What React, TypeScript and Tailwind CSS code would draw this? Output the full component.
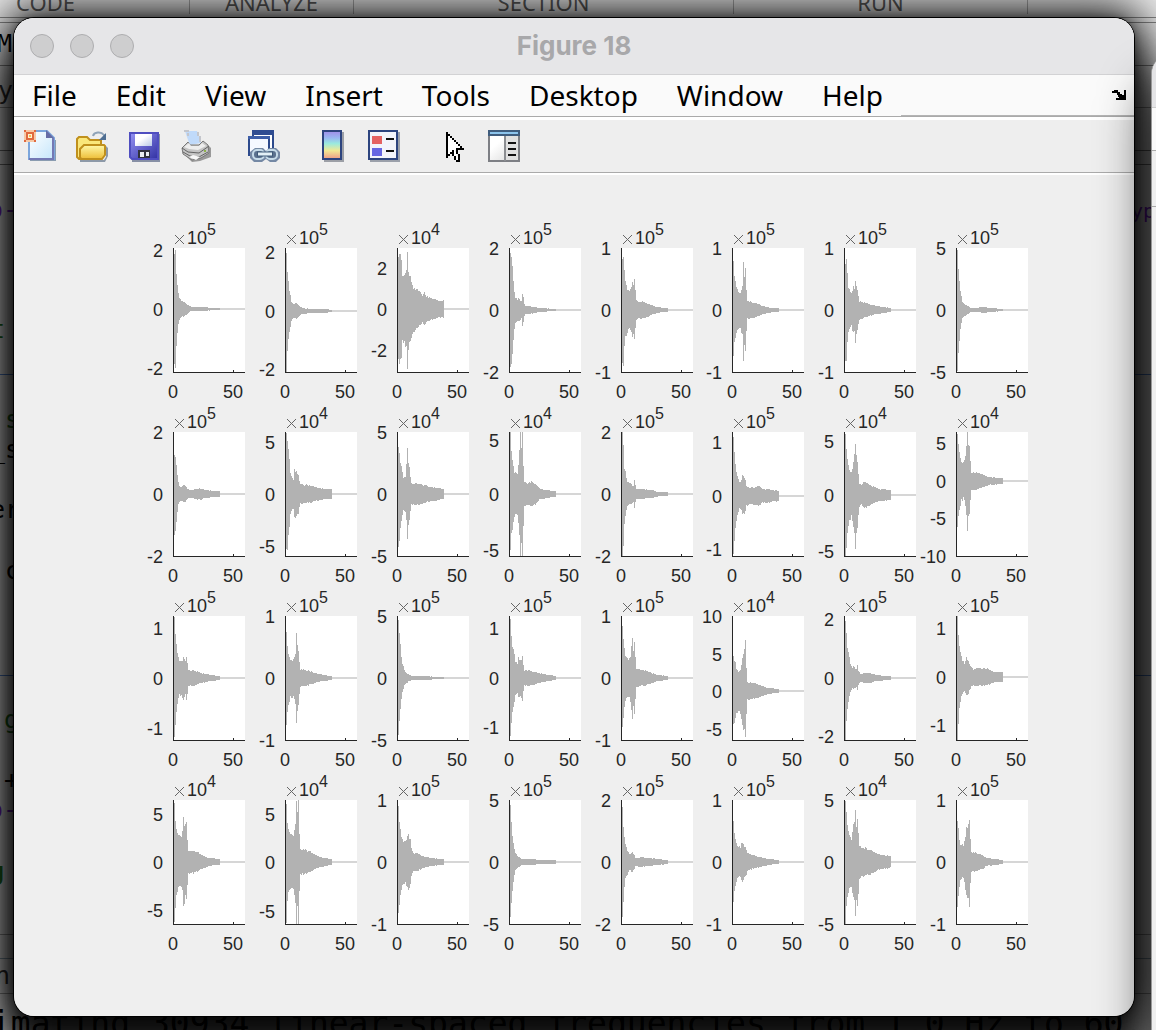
import React from "react";

type Point = [number, number];
type Tick = [string, number];

interface Plot {
  exp: number;
  zero: number;
  ticks: Tick[];
  env: Point[];
}

const PLOT_W = 72;
const PLOT_H = 124;
const SIGNAL_END = 46;

const full = (n: number): Tick[] => [
  [String(n), 0],
  ["0", 62],
  [String(-n), 124],
];

const plots: Plot[] = [
  // row 1
  { exp: 5, zero: 61, ticks: [["2", 2], ["0", 61], ["-2", 120]], env: [[1, 60], [2, 56], [3, 36], [4, 24], [5, 16], [6, 11], [8, 8], [10, 8], [12, 6], [15, 4], [18, 2], [25, 2], [46, 1]] },
  { exp: 5, zero: 63, ticks: [["2", 4], ["0", 63], ["-2", 121]], env: [[1, 62], [2, 40], [3, 30], [4, 20], [5, 17], [6, 10], [8, 7], [11, 8], [14, 5], [17, 3], [25, 2], [40, 2], [46, 1]] },
  { exp: 4, zero: 61, ticks: [["2", 20], ["0", 61], ["-2", 102]], env: [[1, 50], [2, 55], [4, 54], [5, 34], [7, 35], [9, 40], [10, 57], [11, 40], [13, 32], [16, 22], [20, 20], [22, 17], [25, 14], [27, 16], [30, 12], [34, 11], [38, 10], [42, 8], [46, 9]] },
  { exp: 5, zero: 62, ticks: full(2), env: [[1, 57], [2, 52], [3, 48], [4, 30], [5, 20], [6, 13], [8, 11], [10, 11], [12, 9], [13, 15], [14, 12], [15, 6], [16, 4], [20, 4], [25, 3], [32, 2], [46, 1]] },
  { exp: 5, zero: 62, ticks: full(1), env: [[1, 55], [2, 54], [3, 38], [4, 28], [6, 22], [8, 18], [10, 24], [11, 30], [12, 26], [13, 29], [14, 20], [15, 10], [17, 8], [22, 9], [25, 7], [30, 5], [36, 3], [42, 2], [46, 2]] },
  { exp: 5, zero: 62, ticks: full(1), env: [[1, 47], [2, 33], [3, 31], [4, 22], [6, 19], [8, 18], [9, 22], [10, 26], [11, 49], [12, 36], [13, 43], [14, 20], [15, 9], [20, 8], [24, 7], [28, 5], [35, 3], [42, 2], [46, 2]] },
  { exp: 5, zero: 62, ticks: full(1), env: [[1, 50], [2, 48], [3, 35], [4, 24], [5, 20], [7, 16], [8, 20], [9, 24], [10, 22], [11, 31], [12, 25], [13, 22], [14, 14], [15, 9], [20, 8], [25, 6], [32, 4], [40, 3], [46, 2]] },
  { exp: 5, zero: 62, ticks: full(5), env: [[1, 58], [2, 45], [3, 30], [4, 20], [5, 14], [6, 8], [8, 6], [11, 4], [15, 2], [20, 2], [26, 3], [35, 2], [46, 1]] },
  // row 2
  { exp: 5, zero: 62, ticks: full(2), env: [[1, 43], [2, 36], [3, 28], [4, 18], [5, 11], [6, 8], [8, 7], [10, 9], [12, 8], [14, 5], [18, 4], [22, 5], [27, 6], [32, 4], [40, 3], [46, 3]] },
  { exp: 4, zero: 62, ticks: [["5", 10], ["0", 62], ["-5", 114]], env: [[1, 60], [3, 46], [4, 34], [5, 22], [6, 18], [8, 14], [9, 25], [11, 23], [13, 20], [14, 14], [15, 10], [18, 9], [24, 9], [30, 7], [40, 5], [46, 5]] },
  { exp: 4, zero: 62, ticks: full(5), env: [[1, 50], [2, 45], [3, 33], [5, 22], [6, 17], [8, 18], [9, 28], [10, 46], [11, 33], [12, 28], [13, 18], [14, 11], [18, 11], [24, 10], [30, 8], [36, 7], [46, 5]] },
  { exp: 4, zero: 62, ticks: [["5", 8], ["0", 62], ["-5", 118]], env: [[1, 62], [2, 42], [4, 30], [5, 23], [8, 22], [9, 30], [10, 45], [11, 62], [12, 50], [13, 68], [14, 30], [15, 13], [18, 11], [22, 12], [26, 10], [30, 6], [36, 4], [46, 3]] },
  { exp: 5, zero: 62, ticks: full(2), env: [[1, 62], [2, 50], [3, 28], [5, 16], [6, 12], [8, 11], [11, 9], [12, 8], [13, 14], [14, 9], [15, 5], [20, 5], [30, 4], [38, 2], [46, 2]] },
  { exp: 5, zero: 64, ticks: [["1", 10], ["0", 64], ["-1", 117]], env: [[1, 62], [2, 48], [3, 33], [4, 24], [5, 20], [7, 13], [9, 15], [10, 20], [13, 16], [14, 10], [18, 8], [22, 9], [27, 10], [30, 7], [40, 6], [46, 5]] },
  { exp: 4, zero: 63, ticks: [["5", 9], ["0", 63], ["-5", 119]], env: [[1, 62], [2, 50], [3, 38], [5, 25], [7, 22], [8, 26], [9, 32], [10, 42], [11, 56], [12, 38], [13, 32], [14, 20], [15, 12], [17, 10], [20, 14], [24, 11], [30, 8], [36, 6], [46, 5]] },
  { exp: 4, zero: 49, ticks: [["5", 11], ["0", 49], ["-5", 86], ["-10", 124]], env: [[1, 45], [2, 36], [3, 28], [5, 20], [7, 18], [8, 20], [9, 26], [10, 34], [11, 54], [12, 38], [13, 34], [14, 20], [15, 9], [20, 9], [25, 7], [32, 4], [46, 3]] },
  // row 3
  { exp: 5, zero: 62, ticks: [["1", 12], ["0", 62], ["-1", 112]], env: [[1, 61], [2, 45], [4, 25], [6, 18], [8, 17], [10, 21], [12, 17], [13, 23], [14, 16], [15, 8], [20, 8], [28, 5], [38, 3], [46, 2]] },
  { exp: 5, zero: 62, ticks: full(1), env: [[1, 48], [2, 35], [3, 26], [5, 20], [8, 18], [9, 22], [10, 26], [11, 46], [12, 34], [13, 28], [14, 18], [15, 9], [20, 8], [24, 7], [30, 5], [38, 3], [46, 2]] },
  { exp: 5, zero: 62, ticks: full(5), env: [[1, 59], [2, 45], [3, 34], [4, 22], [5, 15], [7, 8], [9, 5], [12, 3], [15, 2], [25, 2], [46, 1]] },
  { exp: 5, zero: 62, ticks: [["1", 12], ["0", 62], ["-1", 111]], env: [[1, 60], [2, 45], [3, 33], [5, 23], [6, 17], [8, 15], [9, 20], [11, 17], [13, 23], [14, 14], [15, 8], [20, 8], [26, 6], [34, 4], [46, 2]] },
  { exp: 5, zero: 62, ticks: full(1), env: [[1, 50], [2, 38], [3, 28], [5, 20], [7, 18], [8, 20], [9, 23], [11, 39], [12, 28], [13, 35], [14, 20], [15, 9], [20, 8], [24, 8], [28, 6], [36, 3], [46, 2]] },
  { exp: 4, zero: 75, ticks: [["10", 0], ["5", 38], ["0", 75], ["-5", 113]], env: [[1, 37], [2, 32], [3, 28], [4, 22], [7, 20], [8, 22], [9, 28], [11, 38], [12, 40], [13, 51], [14, 24], [15, 9], [20, 8], [25, 7], [30, 5], [36, 3], [46, 2]] },
  { exp: 5, zero: 62, ticks: [["2", 3], ["0", 62], ["-2", 120]], env: [[1, 62], [2, 45], [3, 30], [5, 20], [6, 14], [8, 10], [9, 12], [12, 9], [13, 12], [14, 7], [16, 4], [20, 5], [26, 5], [32, 3], [46, 2]] },
  { exp: 5, zero: 61, ticks: [["1", 12], ["0", 61], ["-1", 109]], env: [[1, 61], [2, 45], [3, 34], [4, 25], [6, 17], [8, 14], [10, 19], [12, 17], [13, 14], [15, 10], [17, 8], [20, 9], [28, 9], [32, 8], [38, 5], [46, 5]] },
  // row 4
  { exp: 4, zero: 62, ticks: [["5", 14], ["0", 62], ["-5", 110]], env: [[1, 60], [2, 45], [3, 32], [5, 26], [8, 25], [9, 30], [10, 43], [12, 36], [13, 40], [14, 24], [15, 12], [20, 11], [24, 10], [28, 7], [36, 4], [46, 3]] },
  { exp: 4, zero: 62, ticks: [["5", 14], ["0", 62], ["-5", 111]], env: [[1, 60], [2, 40], [3, 32], [5, 27], [8, 26], [9, 34], [10, 40], [11, 59], [12, 48], [13, 68], [14, 30], [15, 13], [20, 12], [24, 11], [30, 7], [36, 5], [46, 3]] },
  { exp: 5, zero: 62, ticks: full(1), env: [[1, 55], [2, 42], [3, 32], [5, 22], [8, 20], [9, 24], [11, 27], [13, 24], [14, 14], [16, 9], [20, 9], [26, 6], [34, 4], [46, 3]] },
  { exp: 5, zero: 62, ticks: full(5), env: [[1, 59], [2, 40], [3, 28], [4, 20], [5, 14], [6, 9], [9, 5], [13, 3], [24, 3], [30, 2], [46, 2]] },
  { exp: 5, zero: 62, ticks: full(2), env: [[1, 56], [2, 38], [3, 26], [4, 18], [6, 12], [8, 8], [11, 10], [13, 7], [14, 4], [20, 5], [28, 4], [36, 3], [46, 2]] },
  { exp: 5, zero: 62, ticks: full(1), env: [[1, 42], [2, 30], [4, 20], [6, 15], [8, 15], [10, 21], [12, 16], [13, 15], [15, 9], [20, 7], [28, 5], [36, 3], [46, 2]] },
  { exp: 4, zero: 62, ticks: full(5), env: [[1, 60], [2, 48], [3, 36], [5, 26], [7, 24], [9, 38], [10, 40], [11, 55], [12, 38], [13, 44], [14, 30], [15, 16], [18, 15], [24, 13], [30, 10], [36, 7], [46, 6]] },
  { exp: 5, zero: 62, ticks: full(1), env: [[1, 46], [2, 36], [3, 24], [4, 18], [7, 16], [8, 20], [9, 28], [10, 34], [12, 40], [13, 45], [14, 22], [15, 10], [20, 9], [26, 7], [30, 4], [40, 3], [46, 2]] },
];

function envelopeAt(env: Point[], x: number): number {
  for (let i = 1; i < env.length; i++) {
    const [x0, h0] = env[i - 1];
    const [x1, h1] = env[i];
    if (x <= x1) return h0 + ((h1 - h0) * (x - x0)) / (x1 - x0);
  }
  return env[env.length - 1][1];
}

function waveform(plot: Plot, seed: number): string {
  const jitter = (n: number) => {
    const s = Math.sin(n * 12.9898 + seed * 78.233) * 43758.5453;
    return 1.06 - 0.16 * (s - Math.floor(s));
  };
  let top = "";
  let bottom = "";
  for (let x = 1; x <= SIGNAL_END; x++) {
    const h = envelopeAt(plot.env, x);
    const up = Math.max(0, Math.round(plot.zero - h * jitter(x)));
    const down = Math.min(PLOT_H, Math.round(plot.zero + h * jitter(x + 100)));
    top += `L${x} ${up}H${x + 1}`;
    bottom = `L${x + 1} ${down}H${x}` + bottom;
  }
  return `M1 ${plot.zero}${top}${bottom}Z`;
}

function Subplot({ plot, seed }: { plot: Plot; seed: number }) {
  return (
    <svg
      role="img"
      aria-label={`Signal ${seed + 1}`}
      width={112}
      height={184}
      className="block overflow-visible fill-[#262626] font-['Liberation_Sans',Arial,sans-serif] text-[18px]"
    >
      <g transform="translate(44 33)">
        <rect width={PLOT_W} height={PLOT_H} fill="#fff" />
        <g shapeRendering="crispEdges">
          <rect x={SIGNAL_END} y={plot.zero - 1} width={PLOT_W - SIGNAL_END} height={2} fill="#d6d6d6" />
          <path d={waveform(plot, seed)} fill="#b2b2b2" />
          <rect width={1} height={PLOT_H + 1} />
          <rect y={PLOT_H} width={PLOT_W} height={1} />
          <rect x={60} y={PLOT_H - 2} width={1} height={2} />
        </g>
        {plot.ticks.map(([label, y]) => (
          <text key={label} x={-10} y={y + 7} textAnchor="end">
            {label}
          </text>
        ))}
        <text x={0} y={150} textAnchor="middle">0</text>
        <text x={60} y={150} textAnchor="middle">50</text>
        <path d="M2 -13L11 -4M11 -13L2 -4" stroke="#666" fill="none" />
        <text x={14} y={-4}>10</text>
        <text x={34} y={-13} className="text-[16px]">{plot.exp}</text>
      </g>
    </svg>
  );
}

const iconProps = { width: 32, height: 32, viewBox: "0 0 32 32", "aria-hidden": true } as const;

const NewIcon = () => (
  <svg {...iconProps}>
    <defs>
      <linearGradient id="page" x1="0" y1="0" x2="1" y2="1">
        <stop offset="0" stopColor="#fff" /><stop offset="1" stopColor="#c5e6fb" />
      </linearGradient>
    </defs>
    <path d="M6 31h26V10h-2v19H6z" fill="#8a9cb0" />
    <path d="M5 1h18l7 7v21H5z" fill="url(#page)" stroke="#7ca6dc" strokeWidth="2" />
    <path d="M29 8v21H5" fill="none" stroke="#7479b4" strokeWidth="2" />
    <path d="M22 0l8 8h-8z" fill="#666da6" />
    <path d="M0 0h12v12H0z" fill="#f6c9a6" />
    <path d="M3 3h6v6H3z" fill="#fff3d0" stroke="#e0693f" strokeWidth="2" />
    <path d="M5 5h2v2H5z" fill="#f4ba50" />
    <path d="M0 0h2v2H0zM10 0h2v2h-2zM0 10h2v2H0zM10 10h2v2h-2z" fill="#e0693f" />
  </svg>
);

const OpenIcon = () => (
  <svg {...iconProps}>
    <defs>
      <linearGradient id="folder" x1="0" y1="0" x2="0" y2="1">
        <stop offset="0" stopColor="#fff9a8" /><stop offset="1" stopColor="#edbd36" />
      </linearGradient>
    </defs>
    <path d="M4 30h24l2-3V16l2 2v8l-3 6H4z" fill="#8d99a8" />
    <path d="M1 27V9l2-2h8l3 3h11v5H9L4 29H3z" fill="#fae77a" stroke="#c0901c" strokeWidth="2" />
    <path d="M8 15h20l1 1v9l-3 4H5l-1-2V19z" fill="url(#folder)" stroke="#c0901c" strokeWidth="2" />
    <path d="M17 6c1-4 8-5 11-1l1 2" fill="none" stroke="#8fa3b8" strokeWidth="2" />
    <path d="M30 3v7h-7z" fill="#4f6e92" />
  </svg>
);

const SaveIcon = () => (
  <svg {...iconProps}>
    <defs>
      <linearGradient id="disk" x1="0" y1="0" x2="1" y2="1">
        <stop offset="0" stopColor="#9593f4" /><stop offset="1" stopColor="#3131a2" />
      </linearGradient>
      <linearGradient id="diskLabel" x1="0" y1="0" x2="1" y2="1">
        <stop offset=".4" stopColor="#fff" /><stop offset="1" stopColor="#b9c9e8" />
      </linearGradient>
    </defs>
    <path d="M4 4h28v28H4z" fill="#8790a5" />
    <path d="M1 3h28v26H3l-2-2z" transform="translate(1 0)" fill="url(#disk)" stroke="#4f4ec0" strokeWidth="2" />
    <path d="M7 4h17v12H7z" fill="url(#diskLabel)" />
    <path d="M10 20h12v8H10z" fill="#30323c" />
    <path d="M12 22h4v5h-4zM18 22h3v4h-3z" fill="#e9edf0" />
  </svg>
);

const PrintIcon = () => (
  <svg {...iconProps}>
    <path d="M7 27l5 5 8-1 11-4v-9l-2-2z" fill="#999" />
    <path d="M5 1h12l4 12-11 2-2-5z" fill="#c0dafa" />
    <path d="M4 0h5v2H4zM7 3h2v3H7zM17 2h2v4h-2zM19 6h2v6h-2z" fill="#c4c6cc" />
    <path d="M2 18l6-6 2 3h9l4-4 5 4 1 8-8 5-9 2-9-6z" fill="#c4c4c4" stroke="#777" />
    <path d="M4 17l5-4 2 3h8l3-3 4 3-8 4-9-1z" fill="#ededed" />
    <path d="M2 18l6 4 11 1 10-7M3 22l7 4 9 1 9-5" fill="none" stroke="#636363" />
    <path d="M9 27l4-2 7 2-4 3z" fill="#f8f8f8" />
    <path d="M24 20h2v2h-2z" fill="#8db24b" />
  </svg>
);

const LinkIcon = () => (
  <svg {...iconProps}>
    <path d="M5 1h20v18H5z" fill="#fff" stroke="#2d4a8c" strokeWidth="2" />
    <path d="M4 0h22v5H4z" fill="#2f4c91" />
    <path d="M1 7h20v18H1z" fill="#f5f8ff" stroke="#2d4a8c" strokeWidth="2" />
    <path d="M0 6h22v3H0z" fill="#3d5ea8" />
    <path d="M7 18h8l3 3 3-3h7l4 4v6l-4 4h-6l-4-3-4 3H6l-4-4v-6z" fill="#7488a4" />
    <rect x="5" y="20" width="11" height="9" rx="4" fill="#5b718e" stroke="#c6dbe8" strokeWidth="2" />
    <rect x="18" y="20" width="11" height="9" rx="4" fill="#5b718e" stroke="#c6dbe8" strokeWidth="2" />
    <path d="M9 24h16" stroke="#3f5a78" strokeWidth="5" />
    <path d="M10 24h14" stroke="#e4f1f7" strokeWidth="3" />
  </svg>
);

const ColorbarIcon = () => (
  <svg {...iconProps}>
    <defs>
      <linearGradient id="bar" x1="0" y1="0" x2="0" y2="1">
        <stop offset="0" stopColor="#a08ce8" /><stop offset=".25" stopColor="#98b8f2" />
        <stop offset=".45" stopColor="#9aeade" /><stop offset=".7" stopColor="#f2e994" />
        <stop offset="1" stopColor="#ee9a87" />
      </linearGradient>
    </defs>
    <path d="M8 2h20v30H8z" fill="#9c9fa6" />
    <path d="M7 1h18v28H7z" fill="url(#bar)" stroke="#2d447f" strokeWidth="2" />
  </svg>
);

const LegendIcon = () => (
  <svg {...iconProps}>
    <path d="M2 2h30v30H2z" fill="#9ba0aa" />
    <path d="M1 1h28v28H1z" fill="#f3f4fb" stroke="#2d447f" strokeWidth="2" />
    <path d="M4 6h10v8H4z" fill="#e56262" />
    <path d="M4 18h10v8H4z" fill="#6666e2" />
    <path d="M18 8h8v2h-8zM18 20h8v2h-8z" fill="#111" />
  </svg>
);

const PointerIcon = () => (
  <svg {...iconProps} shapeRendering="crispEdges">
    <path d="M11 4v22h2v-2h2v-2h2v4h2v4h4v-4h-2v-4h-2v-2h7v-2h-2v-2h-2v-2h-2v-2h-2v-2h-2V8h-2V6h-2V4z" fill="#fff" />
    <path
      d="M10 2h2v26h-2zM12 4h2v2h-2zM14 6h2v2h-2zM16 8h2v2h-2zM18 10h2v2h-2zM20 12h2v2h-2zM22 14h2v2h-2zM24 16h2v2h-2zM20 18h8v2h-8zM12 24h2v2h-2zM14 22h2v2h-2zM16 20h2v6h-2zM18 26h2v4h-2zM20 30h4v2h-4zM20 20h2v4h-2zM22 24h2v6h-2z"
      fill="#000"
    />
  </svg>
);

const PanelIcon = () => (
  <svg {...iconProps}>
    <defs>
      <linearGradient id="pane" x1="0" y1="0" x2="1" y2="1">
        <stop offset=".3" stopColor="#fff" /><stop offset="1" stopColor="#d5d5d5" />
      </linearGradient>
    </defs>
    <path d="M1 5h30v26H1z" fill="url(#pane)" stroke="#7d7f84" strokeWidth="2" />
    <path d="M16 5h2v26h-2z" fill="#8c8e92" />
    <path d="M18 6h12v24H18z" fill="#e0e0e0" />
    <path d="M0 0h32v6H0z" fill="#3f5c7d" />
    <path d="M2 2h28v2H2z" fill="#8cc4ec" />
    <path d="M20 12h8v2h-8zM20 18h8v2h-8zM20 24h8v2h-8z" fill="#111" />
  </svg>
);

const toolGroups: { label: string; Icon: () => React.JSX.Element }[][] = [
  [
    { label: "New Figure", Icon: NewIcon },
    { label: "Open File", Icon: OpenIcon },
    { label: "Save Figure", Icon: SaveIcon },
    { label: "Print Figure", Icon: PrintIcon },
  ],
  [{ label: "Link Plot", Icon: LinkIcon }],
  [
    { label: "Insert Colorbar", Icon: ColorbarIcon },
    { label: "Insert Legend", Icon: LegendIcon },
  ],
  [
    { label: "Edit Plot", Icon: PointerIcon },
    { label: "Open Property Inspector", Icon: PanelIcon },
  ],
];

const menus = ["File", "Edit", "View", "Insert", "Tools", "Desktop", "Window", "Help"];

function FigureWindow() {
  return (
    <main className="relative flex flex-1 flex-col overflow-hidden rounded-[20px] bg-[#efefef]">
      <header className="flex h-[57px] items-center border-b border-[#d2d2d4] bg-[#e6e6e8] px-4">
        <div className="flex flex-1 gap-4">
          {["Close", "Minimize", "Zoom"].map((name) => (
            <button
              key={name}
              aria-label={name}
              className="size-6 rounded-full border border-[#adadaf] bg-[#cececf]"
            />
          ))}
        </div>
        <h1 className="font-['Inter',sans-serif] text-[26px] leading-8 font-bold text-[#a8a8aa]">Figure 18</h1>
        <div className="flex-1" />
      </header>
      <nav className="flex h-[42px] border-b border-[#aaa] bg-[#fafafa]">
        <div className="flex items-center gap-[39px] px-[18px] font-['Noto_Sans',sans-serif] text-[28px] leading-[41px] text-black">
          {menus.map((m) => (
            <button key={m}>{m}</button>
          ))}
        </div>
        <div className="flex flex-1 items-center justify-end border-b border-[#b4b4b4] pr-[8px]">
          <button aria-label="Dock Figure">
            <svg width="14" height="12" viewBox="0 0 14 12" shapeRendering="crispEdges" aria-hidden>
              <path d="M0 2h2v2H0zM2 1h4v2h2v2h2v1h2V1h2v10H4V9h3V8H6V6H5V4H2z" fill="#000" />
            </svg>
          </button>
        </div>
      </nav>
      <div className="flex h-[56px] items-center gap-9 border-t-[3px] border-b border-t-white border-b-[#aaa] bg-[#eee] pl-[10px]">
        {toolGroups.map((group, i) => (
          <div key={i} className="flex gap-5">
            {group.map(({ label, Icon }) => (
              <button key={label} aria-label={label}>
                <Icon />
              </button>
            ))}
          </div>
        ))}
      </div>
      <section className="flex-1 border-t-2 border-white pt-10 pr-[110px] pb-8 pl-[115px]">
        <div className="grid grid-cols-8">
          {plots.map((p, i) => (
            <Subplot key={i} plot={p} seed={i} />
          ))}
        </div>
      </section>
    </main>
  );
}

const editorFragments: { text: string; className: string }[] = [
  { text: "M", className: "top-[26px] left-[-3px] text-black" },
  { text: "y", className: "top-[73px] left-[-2px] text-[#333]" },
  { text: "o-", className: "top-[192px] left-[-12px] text-[#7a20d0]" },
  { text: "t", className: "top-[312px] left-[-10px] text-[#207020]" },
  { text: "s", className: "top-[402px] left-[5px] text-[#207020]" },
  { text: "_s", className: "top-[432px] left-[-10px] text-black" },
  { text: "er", className: "top-[492px] left-[-10px] text-black" },
  { text: "c", className: "top-[553px] left-[5px] text-black" },
  { text: "g", className: "top-[702px] left-[4px] text-[#207020]" },
  { text: "+", className: "top-[762px] left-[4px] text-black" },
  { text: "o-", className: "top-[792px] left-[-12px] text-[#7a20d0]" },
  { text: "g", className: "top-[854px] left-[-11px] text-[#207020] font-bold" },
  { text: "n", className: "top-[958px] left-[-5px] text-[#333]" },
];

const dividers = [
  "top-[17px] bg-[#888]",
  "top-[22px] bg-[#888]",
  "top-[65px] bg-[#888]",
  "top-[107px] bg-[#999]",
  "top-[150px] bg-[#777]",
  "top-[164px] bg-[#777]",
  "top-[374px] bg-[#5080d0]",
  "top-[675px] bg-[#5080d0]",
  "top-[934px] bg-[#999]",
  "top-[958px] bg-[#8aa0b0]",
  "top-[993px] bg-[#999]",
];

function EditorBehind() {
  return (
    <div aria-hidden className="absolute inset-0 overflow-hidden bg-[#ececec]">
      <div className="flex h-[14px] font-['Noto_Sans',sans-serif] text-[22px] leading-[4px] text-[#5a5a5a]">
        <div className="w-[190px] border-r border-[#aaa] pl-4">CODE</div>
        <div className="w-[164px] border-r border-[#aaa] text-center">ANALYZE</div>
        <div className="w-[380px] border-r border-[#aaa] text-center">SECTION</div>
        <div className="w-[294px] border-r border-[#aaa] text-center">RUN</div>
      </div>
      {dividers.map((d) => (
        <div key={d} className={`absolute inset-x-0 h-px ${d}`} />
      ))}
      {editorFragments.map((f, i) => (
        <span
          key={i}
          className={`absolute font-['DejaVu_Sans_Mono',monospace] text-[25px] leading-9 ${f.className}`}
        >
          {f.text}
        </span>
      ))}
      <span className="absolute top-[196px] right-[1px] font-['DejaVu_Sans_Mono',monospace] text-[20px] text-[#7a20d0]">
        yp
      </span>
      <p className="absolute bottom-[-12px] left-[-9px] font-['DejaVu_Sans_Mono',monospace] text-[33px] leading-9 whitespace-pre text-black">
        imating 30934 linear-spaced frequencies from 1.0 Hz to 60.
      </p>
    </div>
  );
}

function NeighbourWindow() {
  return (
    <div
      aria-hidden
      className="absolute top-[54px] -right-[60px] -bottom-16 flex w-[65px] flex-col rounded-l-[20px] border-l border-[#999] bg-[#efefef] shadow-[0_34px_50px_rgba(0,0,0,0.85)]"
    >
      <div className="h-[54px] rounded-tl-[20px] border-b border-[#ccc] bg-[#e4e4e6]" />
      <div className="h-[43px] border-b border-[#aaa] bg-[#fafafa]" />
      <div className="h-[56px] border-b border-[#aaa]" />
    </div>
  );
}

export default function App() {
  return (
    <div className="relative flex min-h-screen overflow-hidden pt-[18px] pr-[22px] pb-[14px] pl-[14px]">
      <EditorBehind />
      <div className="relative flex flex-1 rounded-[20px] shadow-[0_0_0_1px_#000,0_0_8px_rgba(0,0,0,0.4),0_-4px_44px_10px_rgba(0,0,0,0.8),0_40px_44px_14px_rgba(0,0,0,0.9)]">
        <FigureWindow />
      </div>
      <NeighbourWindow />
    </div>
  );
}
